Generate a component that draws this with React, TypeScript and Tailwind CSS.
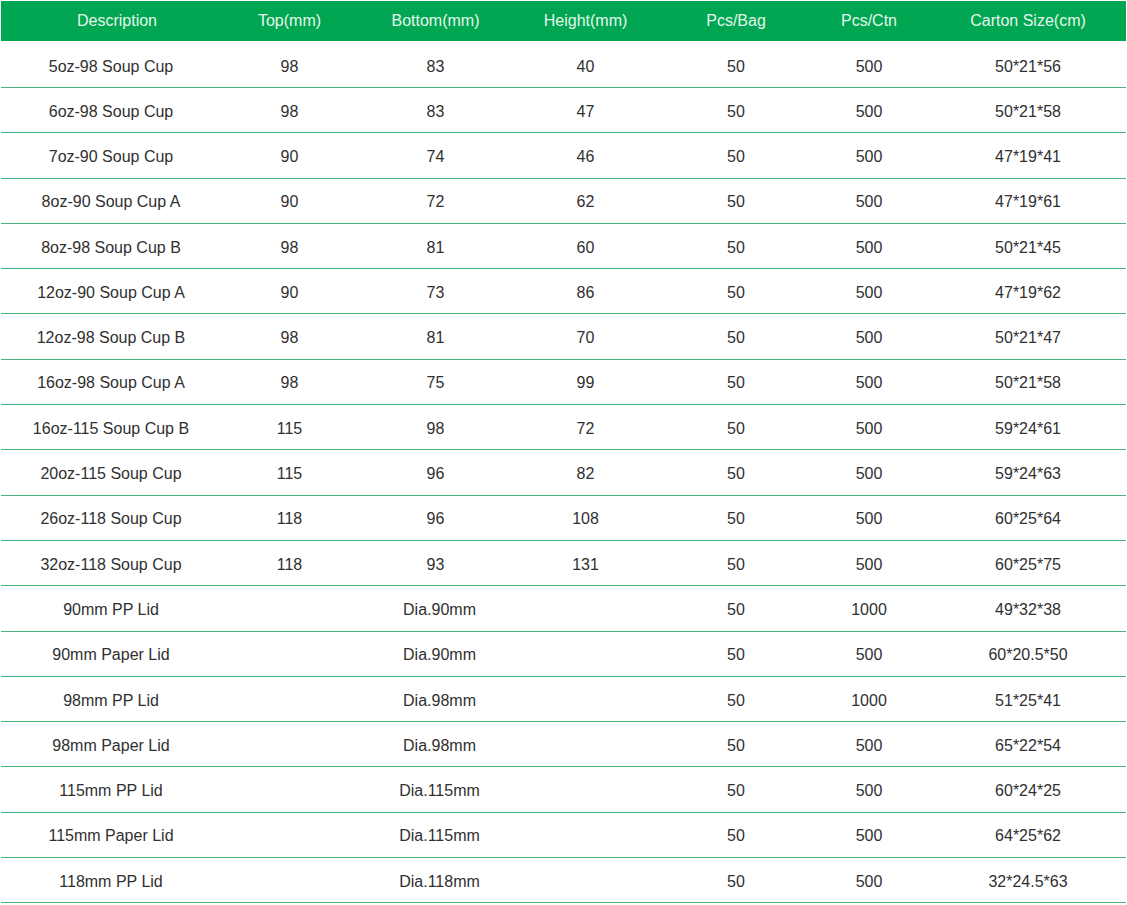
const cups: [string, string, string, string, string, string, string][] = [
  ['5oz-98 Soup Cup', '98', '83', '40', '50', '500', '50*21*56'],
  ['6oz-98 Soup Cup', '98', '83', '47', '50', '500', '50*21*58'],
  ['7oz-90 Soup Cup', '90', '74', '46', '50', '500', '47*19*41'],
  ['8oz-90 Soup Cup A', '90', '72', '62', '50', '500', '47*19*61'],
  ['8oz-98 Soup Cup B', '98', '81', '60', '50', '500', '50*21*45'],
  ['12oz-90 Soup Cup A', '90', '73', '86', '50', '500', '47*19*62'],
  ['12oz-98 Soup Cup B', '98', '81', '70', '50', '500', '50*21*47'],
  ['16oz-98 Soup Cup A', '98', '75', '99', '50', '500', '50*21*58'],
  ['16oz-115 Soup Cup B', '115', '98', '72', '50', '500', '59*24*61'],
  ['20oz-115 Soup Cup', '115', '96', '82', '50', '500', '59*24*63'],
  ['26oz-118 Soup Cup', '118', '96', '108', '50', '500', '60*25*64'],
  ['32oz-118 Soup Cup', '118', '93', '131', '50', '500', '60*25*75'],
];

const lids: [string, string, string, string, string][] = [
  ['90mm PP Lid', 'Dia.90mm', '50', '1000', '49*32*38'],
  ['90mm Paper Lid', 'Dia.90mm', '50', '500', '60*20.5*50'],
  ['98mm PP Lid', 'Dia.98mm', '50', '1000', '51*25*41'],
  ['98mm Paper Lid', 'Dia.98mm', '50', '500', '65*22*54'],
  ['115mm PP Lid', 'Dia.115mm', '50', '500', '60*24*25'],
  ['115mm Paper Lid', 'Dia.115mm', '50', '500', '64*25*62'],
  ['118mm PP Lid', 'Dia.118mm', '50', '500', '32*24.5*63'],
];

const cols = 'grid grid-cols-[232px_113px_179px_121px_180px_86px_1fr]';
const rowCls = `${cols} items-center border-b border-[#4bb47e] text-center`;

export default function App() {
  return (
    <div
      className="w-[1127px] h-[905px] bg-white pt-px pl-px text-[16px] text-[#303030]"
      style={{ fontFamily: '"Liberation Sans", Arial, sans-serif' }}
    >
      <div className="w-[1125px]">
        <div className={`${cols} h-[40px] items-center bg-[#00a651] text-center text-[#e6f7ec]`}>
          <div>Description</div>
          <div>Top(mm)</div>
          <div>Bottom(mm)</div>
          <div>Height(mm)</div>
          <div>Pcs/Bag</div>
          <div>Pcs/Ctn</div>
          <div className="pl-[18px]">Carton Size(cm)</div>
        </div>
        {cups.map((r, i) => (
          <div key={r[0]} className={`${rowCls} ${i === 0 ? 'h-[47px] pt-[5px]' : 'h-[45.3px] pt-[3px]'}`}>
            <div className="pr-[12px]">{r[0]}</div>
            <div>{r[1]}</div>
            <div>{r[2]}</div>
            <div>{r[3]}</div>
            <div>{r[4]}</div>
            <div>{r[5]}</div>
            <div className="pl-[18px]">{r[6]}</div>
          </div>
        ))}
        {lids.map((r) => (
          <div key={r[0]} className={`${rowCls} h-[45.3px] pt-[3px]`}>
            <div className="pr-[12px]">{r[0]}</div>
            <div className="col-span-3">{r[1]}</div>
            <div>{r[2]}</div>
            <div>{r[3]}</div>
            <div className="pl-[18px]">{r[4]}</div>
          </div>
        ))}
      </div>
    </div>
  );
}
